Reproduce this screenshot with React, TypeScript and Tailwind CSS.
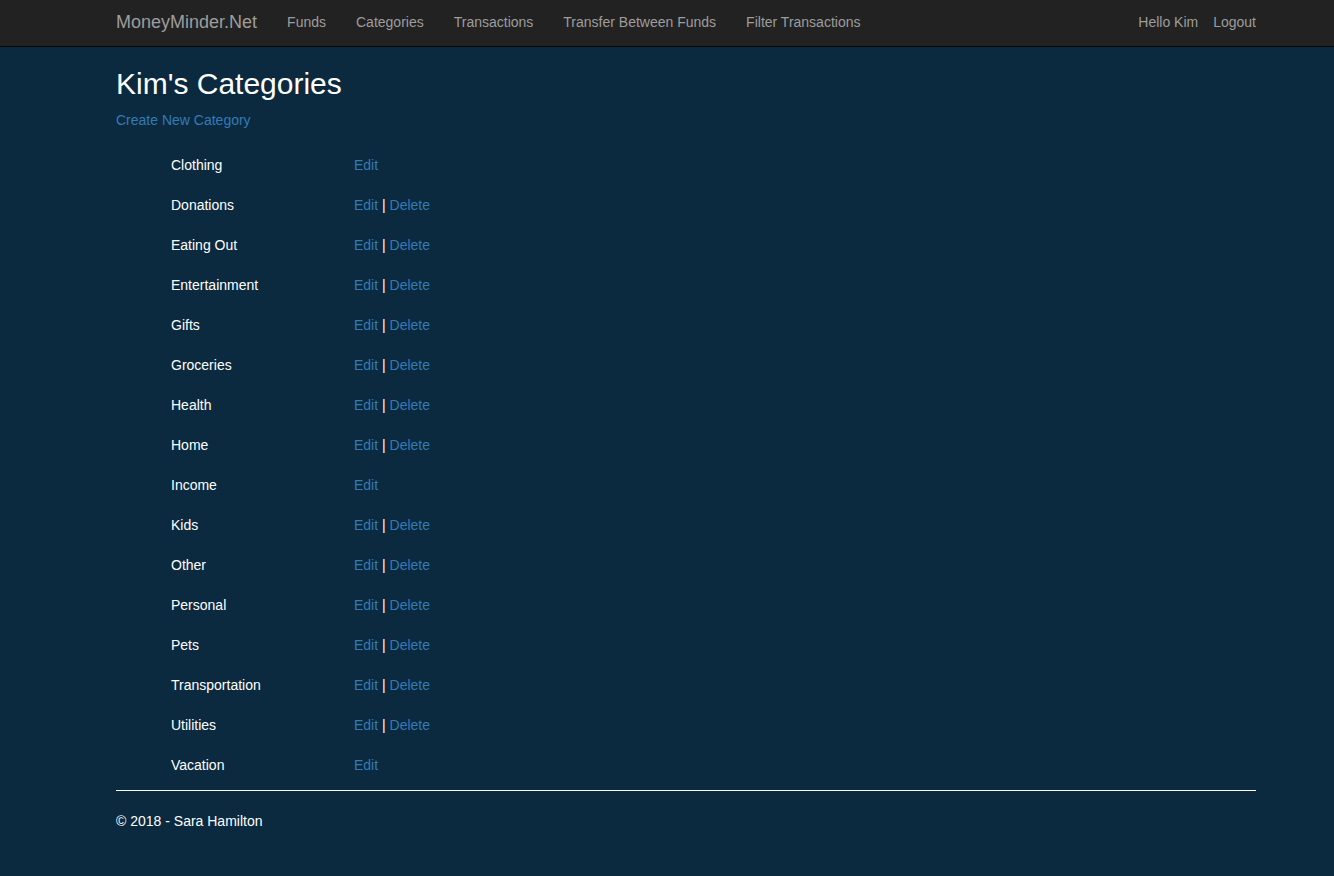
import React from 'react'

// Categories list for the signed-in user; some are built-in and cannot be deleted.
const categories = [
  { name: 'Clothing', canDelete: false },
  { name: 'Donations', canDelete: true },
  { name: 'Eating Out', canDelete: true },
  { name: 'Entertainment', canDelete: true },
  { name: 'Gifts', canDelete: true },
  { name: 'Groceries', canDelete: true },
  { name: 'Health', canDelete: true },
  { name: 'Home', canDelete: true },
  { name: 'Income', canDelete: false },
  { name: 'Kids', canDelete: true },
  { name: 'Other', canDelete: true },
  { name: 'Personal', canDelete: true },
  { name: 'Pets', canDelete: true },
  { name: 'Transportation', canDelete: true },
  { name: 'Utilities', canDelete: true },
  { name: 'Vacation', canDelete: false },
]

const navLinks = ['Funds', 'Categories', 'Transactions', 'Transfer Between Funds', 'Filter Transactions']

export default function App() {
  return (
    <div className="min-h-[876px] bg-[#0b2a3f] text-white font-['Liberation_Sans',Arial,sans-serif] text-[14px] leading-[20px]">
      {/* Top navbar */}
      <nav className="h-[47px] bg-[#222222] border-b border-[#080808] pb-[2px]">
        <div className="w-[1140px] ml-[116px] h-full flex items-center">
          <a href="#" className="text-[18px] text-[#9d9d9d] mr-[15px]">
            MoneyMinder.Net
          </a>
          {navLinks.map((l) => (
            <a key={l} href="#" className="px-[15px] text-[#9d9d9d]">
              {l}
            </a>
          ))}
          <div className="ml-auto flex items-center">
            <span className="text-[#9d9d9d] pr-[15px]">Hello Kim</span>
            <a href="#" className="text-[#9d9d9d]">
              Logout
            </a>
          </div>
        </div>
      </nav>

      <main className="w-[1140px] ml-[116px]">
        <h2 className="mt-[20px] mb-[10px] text-[30px] leading-[33px] font-normal">Kim's Categories</h2>
        <a href="#" className="text-[#337ab7]">
          Create New Category
        </a>

        <div className="mt-[15px] pl-[55px]">
          {categories.map((c) => (
            <div key={c.name} className="h-[40px] flex items-center">
              <span className="w-[183px]">{c.name}</span>
              <span>
                <a href="#" className="text-[#337ab7]">
                  Edit
                </a>
                {c.canDelete && (
                  <>
                    {' | '}
                    <a href="#" className="text-[#337ab7]">
                      Delete
                    </a>
                  </>
                )}
              </span>
            </div>
          ))}
        </div>

        <hr className="mt-[5px] border-t border-white" />
        <footer className="mt-[20px]">
          <p>© 2018 - Sara Hamilton</p>
        </footer>
      </main>
    </div>
  )
}
